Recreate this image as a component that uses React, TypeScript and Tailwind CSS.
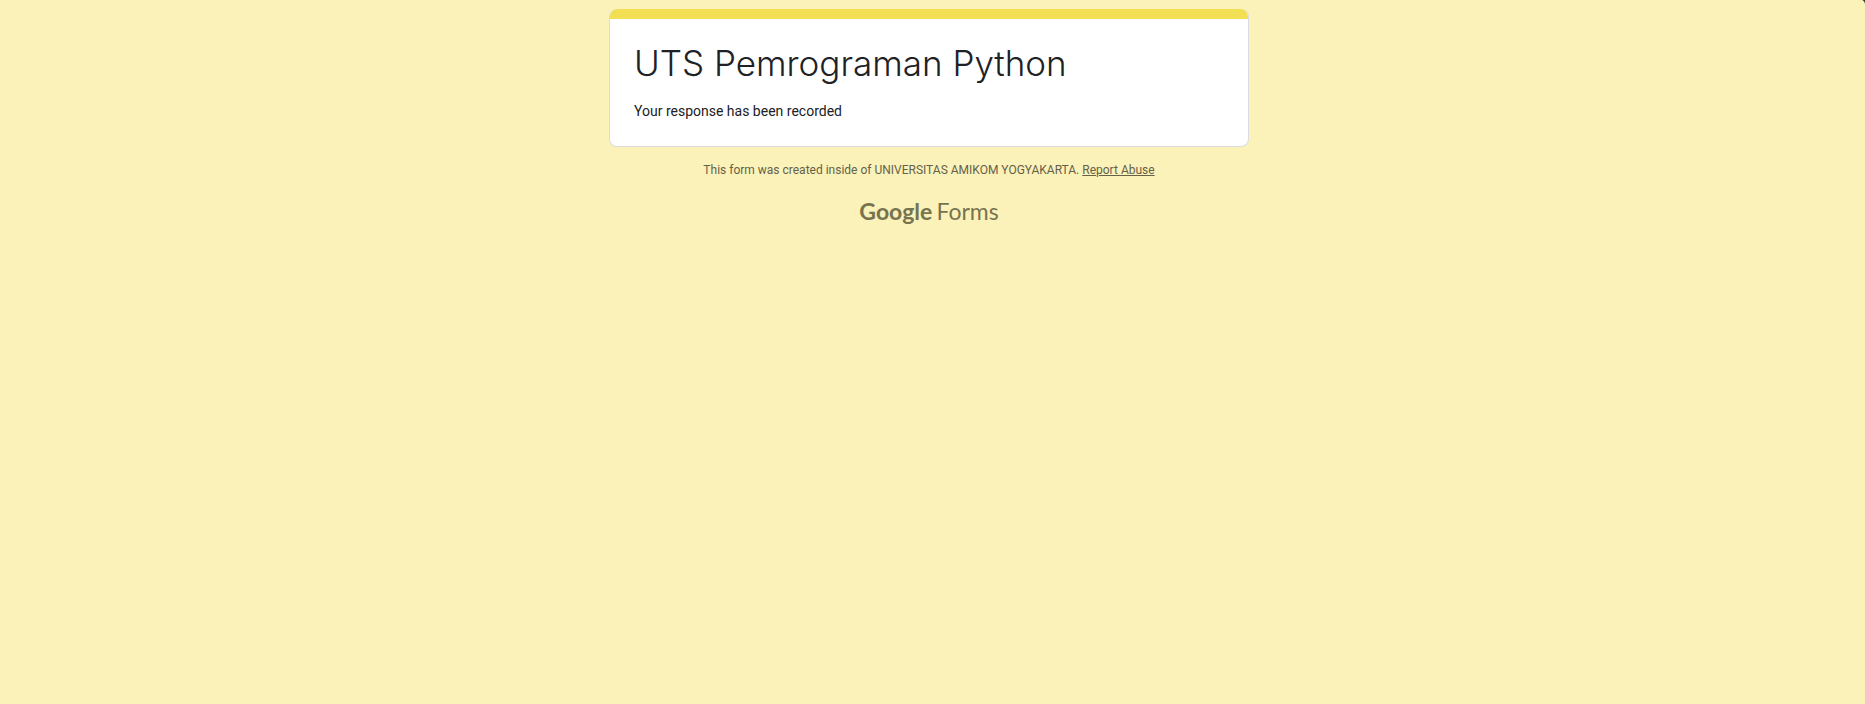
export default function App() {
  return (
    <div className="relative min-h-screen bg-[#fbf2ba] pt-[9px] pr-[7px] font-['Roboto',sans-serif]">
      <svg
        className="absolute top-0 right-0"
        width="5"
        height="5"
        viewBox="0 0 5 5"
        aria-hidden="true"
      >
        <path d="M2 0H5V4C4.7 2 3.6 0.6 2 0Z" fill="#3c3a2c" />
      </svg>
      <main className="mx-auto max-w-[640px]">
        <section className="overflow-hidden rounded-lg border border-t-0 border-[#dadce0] bg-white">
          <div className="-mx-px h-[10px] bg-[#f2df54]" />
          <div className="px-6 pt-5 pb-6">
            <h1 className="font-['Inter',sans-serif] text-[35px] leading-[48px] font-light text-[#202124]">
              UTS Pemrograman Python
            </h1>
            <p className="mt-[14px] text-sm leading-[21px] text-[#202124]">
              Your response has been recorded
            </p>
          </div>
        </section>
        <footer className="text-center text-[#656149]">
          <p className="mt-[15px] text-xs leading-4">
            This form was created inside of UNIVERSITAS AMIKOM YOGYAKARTA.{" "}
            <a href="#report" className="underline">
              Report Abuse
            </a>
          </p>
          <a
            href="#forms"
            className="mt-[17px] inline-flex gap-1 font-['Lato',sans-serif] text-[23px] leading-8 text-[#77734f]"
          >
            <span className="font-bold">Google</span>
            <span>Forms</span>
          </a>
        </footer>
      </main>
    </div>
  );
}
